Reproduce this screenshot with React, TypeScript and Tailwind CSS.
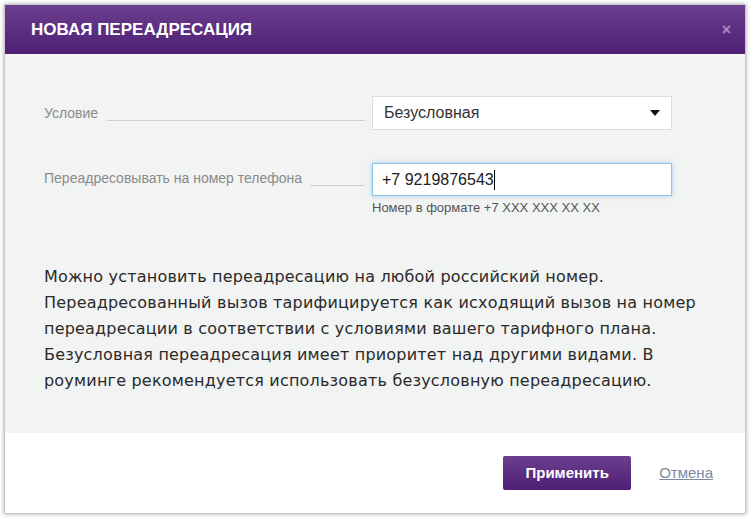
export default function App() {
  return (
    <div className="w-[753px] h-[519px] bg-white p-[4px] pr-[7px] pb-[5px]" style={{ fontFamily: '"Liberation Sans", Arial, sans-serif' }}>
      <div className="h-full flex flex-col border border-[#c9c9c9] shadow-[0_0_4px_rgba(0,0,0,0.35)]">
        <div className="h-[49px] shrink-0 flex items-center justify-between px-[26px] pr-[14px] bg-gradient-to-b from-[#6b3e8f] to-[#4e1f75]">
          <span className="text-white font-bold text-[17px]">НОВАЯ ПЕРЕАДРЕСАЦИЯ</span>
          <span className="text-[#a88fbd] font-bold text-[16px]">×</span>
        </div>
        <div className="flex-1 bg-[#f2f3f3] pl-[39px] pr-[72px] pt-[42px]">
          <div className="flex items-center">
            <div className="w-[328px] flex items-end text-[14px] text-[#8a8a8a]">
              <span>Условие</span>
              <div className="flex-1 ml-[9px] mr-[7px] border-b border-[#cfcfcf] mb-[3px]" />
            </div>
            <div className="w-[300px] h-[34px] bg-white border border-[#dcdcdc] flex items-center justify-between px-[11px] text-[16px] text-[#333]">
              <span>Безусловная</span>
              <svg width="10" height="6" viewBox="0 0 10 6"><path d="M0 0h10L5 6z" fill="#111" /></svg>
            </div>
          </div>
          <div className="flex mt-[33px]">
            <div className="w-[328px] flex items-end text-[14px] text-[#8a8a8a] self-start pt-[5px]">
              <span>Переадресовывать на номер телефона</span>
              <div className="flex-1 ml-[8px] mr-[7px] border-b border-[#cfcfcf] mb-[3px]" />
            </div>
            <div>
              <div className="w-[300px] h-[33px] bg-white border border-[#8ec3ea] shadow-[0_0_4px_rgba(80,160,230,0.5)] flex items-center px-[9px] text-[16px] text-[#222]">
                +7 9219876543<span className="inline-block w-px h-[20px] bg-black" />
              </div>
              <div className="text-[13px] text-[#555] mt-[2px]">Номер в формате +7 XXX XXX XX XX</div>
            </div>
          </div>
          <p className="mt-[46px] text-[16px] leading-[26px] text-[#2a2a2a] whitespace-nowrap" style={{ fontFamily: '"DejaVu Sans", Verdana, sans-serif', letterSpacing: '0.2px' }}>
            Можно установить переадресацию на любой российский номер.<br />
            Переадресованный вызов тарифицируется как исходящий вызов на номер<br />
            переадресации в соответствии с условиями вашего тарифного плана.<br />
            Безусловная переадресация имеет приоритет над другими видами. В<br />
            роуминге рекомендуется использовать безусловную переадресацию.
          </p>
        </div>
        <div className="h-[80px] shrink-0 bg-white flex items-center justify-end pr-[32px] gap-[28px]">
          <button className="w-[128px] h-[34px] rounded-[2px] bg-gradient-to-b from-[#6b3e8f] to-[#4e1f75] text-white font-bold text-[15px]">Применить</button>
          <a className="text-[15px] text-[#7a8aa0] underline">Отмена</a>
        </div>
      </div>
    </div>
  );
}
